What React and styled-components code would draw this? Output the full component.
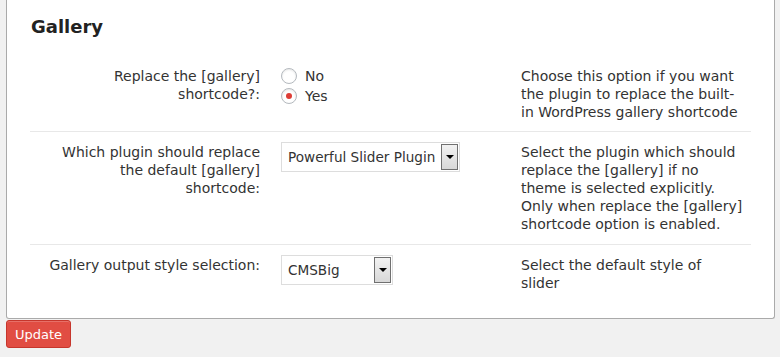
import React from "react";
import styled, { createGlobalStyle } from "styled-components";

const GlobalStyle = createGlobalStyle`
  body {
    margin: 0;
    background: #f1f1f1;
    font-family: "DejaVu Sans", Verdana, sans-serif;
    font-size: 14px;
    color: #444;
  }
`;

const Page = styled.div`
  padding: 0 5px 0 6px;
`;

const Panel = styled.div`
  background: #fff;
  border: 1px solid #aaa;
  border-top: 0;
  border-radius: 0 0 3px 3px;
  padding: 14px 23px 15px 23px;
`;

const Title = styled.h2`
  margin: 0 0 0 1px;
  font-size: 18px;
  font-weight: bold;
  color: #222;
  line-height: 26px;
`;

const Table = styled.div`
  margin-top: 27px;
`;

const Row = styled.div`
  display: grid;
  grid-template-columns: 230px 219px 222.4px;
  column-gap: 21px;
  padding: ${(p) => p.$pad || "11px 0"};
  border-top: ${(p) => (p.$first ? "0" : "1px solid #e8e8e8")};
  line-height: 18px;
`;

const Label = styled.div`
  text-align: right;
  color: #333;
  padding-left: 12px;
`;

const Desc = styled.div`
  color: #333;
`;

const Radios = styled.div`
  display: flex;
  flex-direction: column;
  gap: 2px;
`;

const RadioLine = styled.label`
  display: flex;
  align-items: center;
  gap: 8px;
  color: #333;
  line-height: 18px;
`;

const RadioDot = styled.span`
  width: 14px;
  height: 14px;
  border: 1px solid #b4b9be;
  border-radius: 50%;
  box-shadow: inset 0 1px 2px rgba(0, 0, 0, 0.1);
  display: flex;
  align-items: center;
  justify-content: center;
  flex-shrink: 0;

  &::after {
    content: "";
    width: 6px;
    height: 6px;
    border-radius: 50%;
    background: ${(p) => (p.$checked ? "#dd3d36" : "transparent")};
  }
`;

const Select = styled.div`
  width: ${(p) => p.$w}px;
  height: 26px;
  border: 1px solid #ddd;
  display: flex;
  align-items: center;
  justify-content: space-between;
  box-sizing: content-box;
  padding: 1px 1px 1px 6px;
  margin-top: -1px;
  font-size: 13.6px;
  color: #333;
  background: #fff;
`;

const Arrow = styled.span`
  width: 15px;
  height: 24px;
  border: 1px solid #707070;
  background: linear-gradient(#f2f2f2, #d8d8d8);
  display: flex;
  align-items: center;
  justify-content: center;

  &::after {
    content: "";
    border-left: 4px solid transparent;
    border-right: 4px solid transparent;
    border-top: 4px solid #000;
  }
`;

const UpdateButton = styled.button`
  margin: 1px 0 0 0;
  width: 65px;
  height: 28px;
  background: #e14d43;
  border: 1px solid #c6362c;
  border-radius: 3px;
  color: #fff;
  font-family: "DejaVu Sans", Verdana, sans-serif;
  font-size: 13px;
  padding: 0;
  box-shadow: inset 0 1px 0 rgba(255, 255, 255, 0.2);
`;

export default function App() {
  return (
    <>
      <GlobalStyle />
      <Page>
        <Panel>
          <Title>Gallery</Title>
          <Table>
            <Row $first $pad="0 0 10px">
              <Label>
                Replace the [gallery]
                <br />
                shortcode?:
              </Label>
              <Radios>
                <RadioLine>
                  <RadioDot />
                  No
                </RadioLine>
                <RadioLine>
                  <RadioDot $checked />
                  Yes
                </RadioLine>
              </Radios>
              <Desc>
                Choose this option if you want the plugin to replace the built-in WordPress gallery shortcode
              </Desc>
            </Row>
            <Row>
              <Label>Which plugin should replace the default [gallery] shortcode:</Label>
              <div>
                <Select $w={170}>
                  Powerful Slider Plugin
                  <Arrow />
                </Select>
              </div>
              <Desc>
                Select the plugin which should replace the [gallery] if no theme is selected explicitly.
                Only when replace the [gallery] shortcode option is enabled.
              </Desc>
            </Row>
            <Row>
              <Label>Gallery output style selection:</Label>
              <div>
                <Select $w={103}>
                  CMSBig
                  <Arrow />
                </Select>
              </div>
              <Desc>Select the default style of slider</Desc>
            </Row>
          </Table>
        </Panel>
        <UpdateButton>Update</UpdateButton>
      </Page>
    </>
  );
}
